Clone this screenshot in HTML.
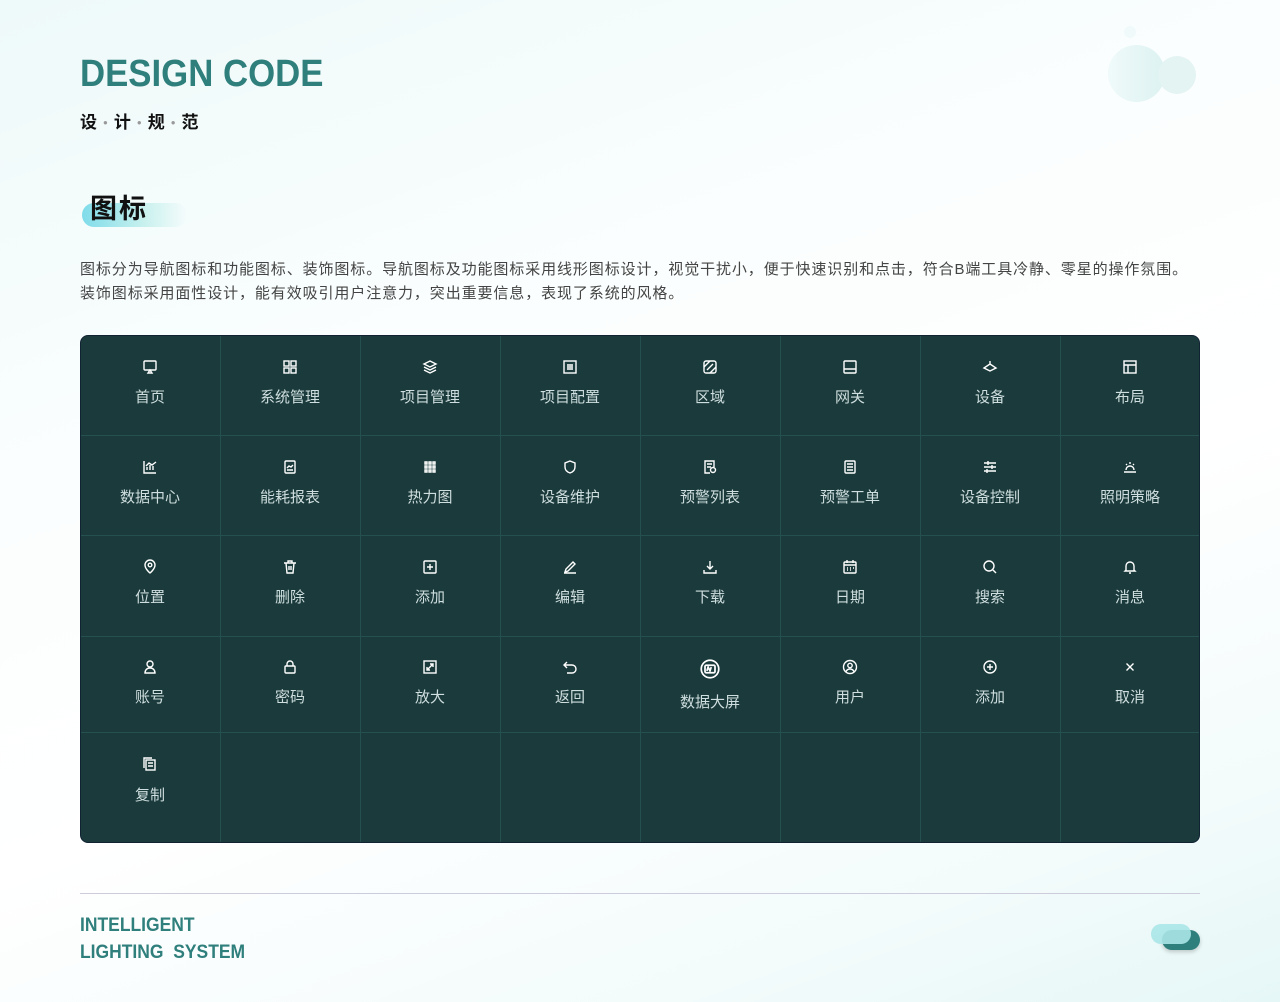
<!DOCTYPE html>
<html><head><meta charset="utf-8"><style>
*{margin:0;padding:0;box-sizing:border-box}
body{width:1280px;height:1002px;overflow:hidden;font-family:"Liberation Sans","Noto Sans CJK SC",sans-serif;background:linear-gradient(160deg,#eef9f9 0%,#fbfefe 35%,#ffffff 60%,#f3fbfb 85%,#e6f7f7 100%);position:relative}
.t1{position:absolute;left:80px;top:53px;font-size:38px;font-weight:bold;color:#2f7f7c;letter-spacing:0;transform:scaleX(.915);transform-origin:left}
.t2{position:absolute;left:80px;top:108px;font-size:17px;font-weight:bold;color:#111}
.t2 i{font-style:normal;color:#999;font-size:8px;margin:0 6px;vertical-align:3px}
.pill{position:absolute;left:82px;top:203px;width:105px;height:24px;border-radius:12px;background:linear-gradient(90deg,#7fdcea,#c9f1ee 60%,rgba(255,255,255,0))}
.h{position:absolute;left:90px;top:187px;font-size:27px;font-weight:bold;color:#111;letter-spacing:2px}
.desc{position:absolute;left:80px;top:258px;font-size:15px;line-height:24px;color:#444;letter-spacing:.9px}
.grid{position:absolute;left:80px;top:335px;width:1120px;height:508px;background:#1b3a3c;border-radius:8px;border:1px solid #123;overflow:hidden}
.c{position:absolute;width:140px;border-right:1px solid #24504f;border-bottom:1px solid #24504f;color:#cfdede;font-size:15px;text-align:center}
.c svg{position:absolute;left:61px;width:16px;height:16px;fill:none;stroke:#fff;stroke-width:1.4}
.c span{position:absolute;left:-1px;width:140px}
.line{position:absolute;left:80px;top:893px;width:1120px;height:1px;background:#ccd}
.f{position:absolute;left:80px;top:912px;font-size:19px;font-weight:bold;color:#2f7f7c;line-height:27px;transform:scaleX(.92);transform-origin:left}
.b{position:absolute;border-radius:50%}
</style></head><body>
<div class="b" style="left:1124px;top:26px;width:12px;height:12px;background:#f0fafa"></div>
<div class="b" style="left:1108px;top:45px;width:57px;height:57px;background:linear-gradient(90deg,#f0fafa,#dcf2f1)"></div>
<div class="b" style="left:1158px;top:56px;width:38px;height:38px;background:#e3f4f3"></div>
<div class="t1">DESIGN CODE</div>
<div class="t2">设<i>●</i>计<i>●</i>规<i>●</i>范</div>
<div class="pill"></div><div class="h">图标</div>
<div class="desc">图标分为导航图标和功能图标、装饰图标。导航图标及功能图标采用线形图标设计，视觉干扰小，便于快速识别和点击，符合B端工具冷静、零星的操作氛围。<br>装饰图标采用面性设计，能有效吸引用户注意力，突出重要信息，表现了系统的风格。</div>
<div class="grid" id="g"></div>
<div class="line"></div>
<div class="f">INTELLIGENT<br>LIGHTING&nbsp; SYSTEM</div>
<div style="position:absolute;left:1162px;top:930px;width:38px;height:20px;border-radius:10px;background:#2f7f7c;box-shadow:0 2px 4px rgba(0,0,0,.2)"></div>
<div style="position:absolute;left:1151px;top:924px;width:40px;height:20px;border-radius:10px;background:rgba(170,230,232,.9)"></div>
<script>
var P={
r:'<rect x="2" y="2" width="12" height="9" rx="1"/><path d="M6 14l2-3 2 3z"/>',
g:'<rect x="2" y="2" width="5" height="5"/><rect x="9" y="2" width="5" height="5"/><rect x="2" y="9" width="5" height="5"/><rect x="9" y="9" width="5" height="5"/>',
l:'<path d="M8 2l6 3-6 3-6-3z M2 8l6 3 6-3 M2 11l6 3 6-3"/>',
d:'<rect x="2" y="2" width="12" height="12"/><path d="M5 6h6M5 8h6M5 10h6"/>',
z:'<rect x="2" y="2" width="12" height="12" rx="2"/><path d="M5 11l6-6M2 8l6-6M8 14l6-6"/>',
w:'<rect x="2" y="2" width="12" height="12" rx="1"/><path d="M2 10h12"/>',
e:'<path d="M2 9l6-4 6 4-6 3z M8 2v3"/>',
b:'<rect x="2" y="2" width="12" height="12"/><path d="M2 6h12M6 6v8"/>',
c:'<path d="M2 2v12h12 M5 11V8M8 11V6M11 11V7M4 7l3-3 3 2 4-3"/>',
n:'<rect x="3" y="2" width="10" height="12" rx="1"/><path d="M5 9l2-2 2 1 2-2M5 11h6"/>',
h:'<path d="M3 3h2v2H3zM7 3h2v2H7zM11 3h2v2h-2zM3 7h2v2H3zM7 7h2v2H7zM11 7h2v2h-2zM3 11h2v2H3zM7 11h2v2H7zM11 11h2v2h-2z"/>',
s:'<path d="M8 2l5 2v4c0 3-2 5-5 6-3-1-5-3-5-6V4z"/>',
y:'<path d="M12 8V2H3v12h5 M5 5h5M5 8h4"/><circle cx="11" cy="11" r="2.5"/>',
q:'<rect x="3" y="2" width="10" height="12" rx="1"/><path d="M5 5h6M5 8h6M5 11h6"/>',
k:'<path d="M2 4h12M2 8h12M2 12h12M6 2v4M10 6v4M5 10v4"/>',
m:'<path d="M2 13h12M4 11a4 4 0 018 0M8 3v2M4 5l1 1M12 5l-1 1"/>',
p:'<path d="M8 14s5-4 5-8a5 5 0 00-10 0c0 4 5 8 5 8z"/><circle cx="8" cy="6" r="1.8"/>',
t:'<path d="M2 4h12M6 4V2h4v2M4 4l1 10h6l1-10M7 7v4M9 7v4"/>',
a:'<rect x="2" y="2" width="12" height="12" rx="1"/><path d="M8 5v6M5 8h6"/>',
e2:'<path d="M3 13l1-3 7-7 2 2-7 7zM2 14h12"/>',
x:'<path d="M8 2v8M5 7l3 3 3-3M2 11v3h12v-3"/>',
cal:'<rect x="2" y="3" width="12" height="11" rx="1"/><path d="M2 6h12M5 1v3M11 1v3M5 9h1M8 9h1M11 9h1M5 11h1M8 11h1"/>',
se:'<circle cx="7" cy="7" r="5"/><path d="M11 11l3 3"/>',
bell:'<path d="M4 11V7a4 4 0 018 0v4l1 1H3zM7 14h2"/>',
u:'<circle cx="8" cy="5" r="3"/><path d="M3 14c0-3 2-5 5-5s5 2 5 5z"/>',
lk:'<rect x="3" y="7" width="10" height="7" rx="1"/><path d="M5 7V5a3 3 0 016 0v2"/>',
ex:'<rect x="2" y="2" width="12" height="12"/><path d="M5 11l6-6M8 5h3v3M5 8v3h3"/>',
bk:'<path d="M5 3L2 6l3 3M2 6h8a4 4 0 010 8H5"/>',
sc:'<circle cx="8" cy="8" r="7"/><rect x="4" y="5" width="8" height="6" rx="1"/><path d="M5.5 9.5l1-3 1.5 3 1-3"/>',
us:'<circle cx="8" cy="8" r="6.5"/><circle cx="8" cy="6.5" r="2.2"/><path d="M4 12.5c1-2 2.5-2.5 4-2.5s3 .5 4 2.5"/>',
ad:'<circle cx="8" cy="8" r="6"/><path d="M8 5v6M5 8h6"/>',
cx:'<path d="M4.5 4.5l7 7M11.5 4.5l-7 7"/>',
cp:'<rect x="4" y="4" width="9" height="10"/><path d="M2 12V2h8M6 7h5M6 10h5"/>'};
var D=[['r','首页'],['g','系统管理'],['l','项目管理'],['d','项目配置'],['z','区域'],['w','网关'],['e','设备'],['b','布局'],
['c','数据中心'],['n','能耗报表'],['h','热力图'],['s','设备维护'],['y','预警列表'],['q','预警工单'],['k','设备控制'],['m','照明策略'],
['p','位置'],['t','删除'],['a','添加'],['e2','编辑'],['x','下载'],['cal','日期'],['se','搜索'],['bell','消息'],
['u','账号'],['lk','密码'],['ex','放大'],['bk','返回'],['sc','数据大屏'],['us','用户'],['ad','添加'],['cx','取消'],
['cp','复制'],['',''],['',''],['',''],['',''],['',''],['',''],['','']];
var R=[[0,100],[100,100],[200,101],[301,96],[397,111]];
var h='';
D.forEach(function(d,i){var r=Math.floor(i/8),c=i%8;var top=R[r][0],ht=R[r][1];
var iy=23,ly=50;if(r==3){iy=22;ly=49;}if(r==4){iy=23;ly=51;}if(d[0]=='sc'){iy=22;ly=54;}
h+='<div class="c" style="left:'+c*140+'px;top:'+top+'px;height:'+ht+'px">'+(d[0]?'<svg viewBox="0 0 16 16" style="top:'+iy+'px'+(d[0]=='sc'?';width:20px;height:20px;left:59px':'')+'">'+P[d[0]]+'</svg><span style="top:'+ly+'px">'+d[1]+'</span>':'')+'</div>';});
document.getElementById('g').innerHTML=h;
</script>
</body></html>
